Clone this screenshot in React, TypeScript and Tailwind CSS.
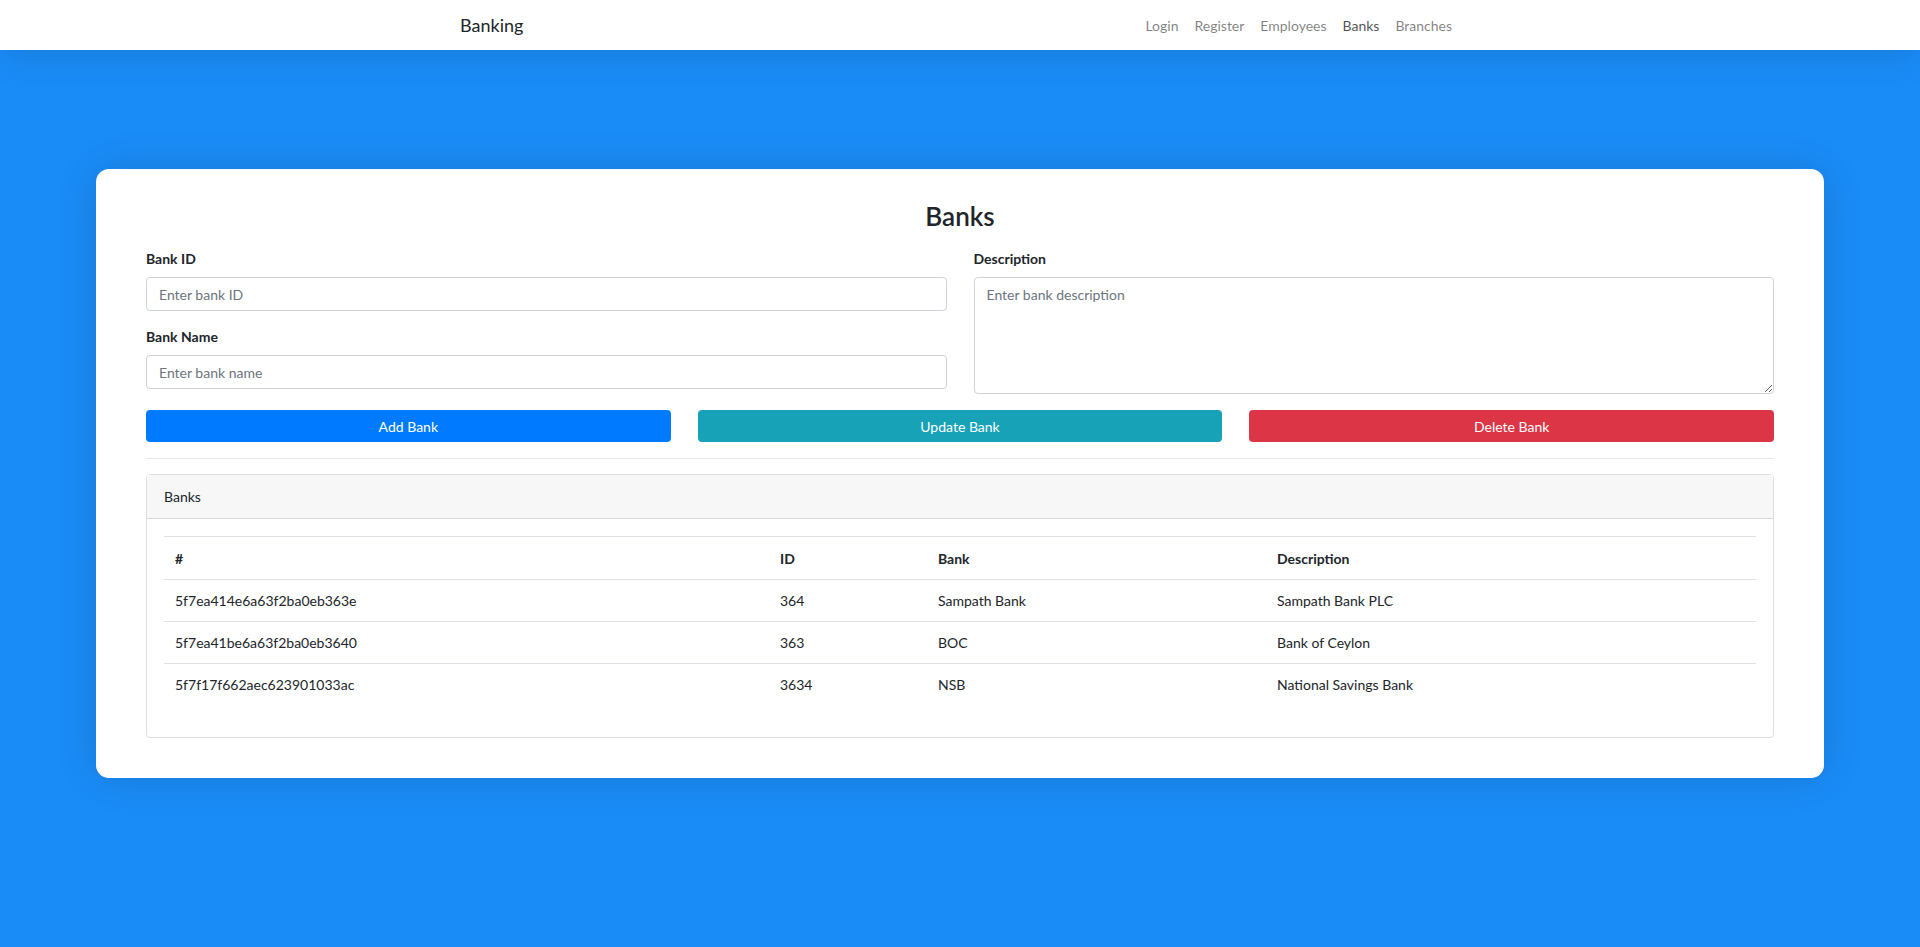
import React from "react";

const banks = [
  { _id: "5f7ea414e6a63f2ba0eb363e", id: "364", name: "Sampath Bank", desc: "Sampath Bank PLC" },
  { _id: "5f7ea41be6a63f2ba0eb3640", id: "363", name: "BOC", desc: "Bank of Ceylon" },
  { _id: "5f7f17f662aec623901033ac", id: "3634", name: "NSB", desc: "National Savings Bank" },
];

const links = ["Login", "Register", "Employees", "Banks", "Branches"];

const App = () => {
  return (
    <div className="min-h-screen bg-[#1a8cf7] font-['Lato',sans-serif] text-[#212529]">
      <nav className="h-[50px] bg-white shadow-[0_2px_40px_rgba(0,0,0,0.14)] relative z-10">
        <div className="w-[1000px] h-full mx-auto flex items-center justify-between">
          <a className="text-[18px] text-[#212529]">Banking</a>
          <ul className="flex items-center">
            {links.map((l) => (
              <li
                key={l}
                className={
                  "px-2 text-[14px] " +
                  (l === "Banks" ? "text-black/70" : "text-black/50")
                }
              >
                {l}
              </li>
            ))}
          </ul>
        </div>
      </nav>

      <div className="pt-[119px] px-[96px]">
        <div className="bg-white rounded-[13px] shadow-[0_0_40px_rgba(0,0,0,0.14)] px-[50px] pt-[30px] pb-[40px]">
          <h3 className="text-[26px] leading-[34px] font-semibold text-center">Banks</h3>

          <div className="grid grid-cols-2 gap-x-[27px] mt-[15px]">
            <div>
              <label className="block text-[14px] leading-[21px] font-bold mb-[8px]">Bank ID</label>
              <input
                className="w-full h-[34px] border border-[#ced4da] rounded-[4px] px-3 text-[14px] placeholder:text-[#6c757d] outline-none"
                placeholder="Enter bank ID"
              />
              <label className="block text-[14px] leading-[21px] font-bold mt-[15px] mb-[8px]">Bank Name</label>
              <input
                className="w-full h-[34px] border border-[#ced4da] rounded-[4px] px-3 text-[14px] placeholder:text-[#6c757d] outline-none"
                placeholder="Enter bank name"
              />
            </div>
            <div>
              <label className="block text-[14px] leading-[21px] font-bold mb-[8px]">Description</label>
              <textarea
                className="block w-full h-[117px] border border-[#ced4da] rounded-[4px] px-3 py-[6px] text-[14px] placeholder:text-[#6c757d] outline-none"
                placeholder="Enter bank description"
              />
            </div>
          </div>

          <div className="grid grid-cols-3 gap-x-[27px] mt-[16px]">
            <button className="h-[32px] rounded-[4px] bg-[#007bff] text-white text-[14px]">Add Bank</button>
            <button className="h-[32px] rounded-[4px] bg-[#17a2b8] text-white text-[14px]">Update Bank</button>
            <button className="h-[32px] rounded-[4px] bg-[#dc3545] text-white text-[14px]">Delete Bank</button>
          </div>

          <hr className="mt-[16px] border-t border-black/10" />

          <div className="mt-[15px] border border-black/[0.125] rounded-[4px]">
            <div className="h-[44px] bg-[#f7f7f7] border-b border-black/[0.125] flex items-center px-[17px] text-[14px]">
              Banks
            </div>
            <div className="px-[17px] pt-[17px] pb-[31px]">
              <table className="w-full table-fixed text-[14px] border-collapse">
                <thead>
                  <tr className="border-t border-b border-[#dee2e6] h-[43px]">
                    <th className="w-[605px] text-left font-bold px-[11px]">#</th>
                    <th className="w-[158px] text-left font-bold px-[11px]">ID</th>
                    <th className="w-[339px] text-left font-bold px-[11px]">Bank</th>
                    <th className="text-left font-bold px-[11px]">Description</th>
                  </tr>
                </thead>
                <tbody>
                  {banks.map((b, i) => (
                    <tr
                      key={b._id}
                      className={"h-[42px] " + (i < banks.length - 1 ? "border-b border-[#dee2e6]" : "")}
                    >
                      <td className="px-[11px]">{b._id}</td>
                      <td className="px-[11px]">{b.id}</td>
                      <td className="px-[11px]">{b.name}</td>
                      <td className="px-[11px]">{b.desc}</td>
                    </tr>
                  ))}
                </tbody>
              </table>
            </div>
          </div>
        </div>
      </div>
    </div>
  );
};

export default App;
